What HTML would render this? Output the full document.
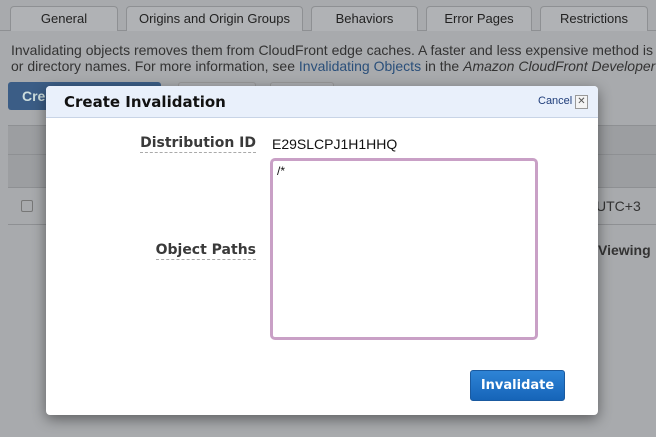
<!DOCTYPE html>
<html><head><style>
body{margin:0;width:656px;height:437px;overflow:hidden;background:#a8aaad;font-family:"Liberation Sans",Arial,sans-serif;position:relative}
.a{position:absolute}
.tab{position:absolute;top:6px;height:24px;border:1px solid #8e9093;border-bottom:none;border-radius:4px 4px 0 0;background:#b0b2b5;font-size:13px;color:#222;text-align:center;line-height:24px}
.lbl{position:absolute;font-weight:bold;font-size:14px;color:#3a3a3a;border-bottom:1px dashed #aaa;line-height:18px;font-family:"DejaVu Sans","Liberation Sans",sans-serif}
</style></head><body>
<div class="a" style="left:0;top:30px;width:656px;height:1px;background:#8e9093"></div>
<div class="tab" style="left:10px;width:106px">General</div>
<div class="tab" style="left:126px;width:175px">Origins and Origin Groups</div>
<div class="tab" style="left:311px;width:105px">Behaviors</div>
<div class="tab" style="left:426px;width:104px">Error Pages</div>
<div class="tab" style="left:540px;width:106px">Restrictions</div>
<div class="a" style="left:11px;top:42px;font-size:14px;color:#333;line-height:16px;white-space:nowrap">Invalidating objects removes them from CloudFront edge caches. A faster and less expensive method is<br>or directory names. For more information, see <span style="color:#2a4f7a">Invalidating Objects</span> in the <i>Amazon CloudFront Developer</i></div>
<div class="a" style="left:8px;top:82px;width:153px;height:28px;background:#3b5d86;border-radius:3px;color:#cdd;font-weight:bold;font-size:14px;line-height:28px;padding-left:14px;box-sizing:border-box">Cre</div>
<div class="a" style="left:178px;top:82px;width:76px;height:28px;border:1px solid #999;border-radius:3px;background:#acaeb1"></div>
<div class="a" style="left:270px;top:82px;width:62px;height:28px;border:1px solid #999;border-radius:3px;background:#acaeb1"></div>
<div class="a" style="left:8px;top:125px;width:648px;height:62px;background:#9c9ea1;border-top:1px solid #8e9093"></div>
<div class="a" style="left:8px;top:154px;width:648px;height:1px;background:#8e9093"></div>
<div class="a" style="left:8px;top:187px;width:648px;height:1px;background:#8e9093"></div>
<div class="a" style="left:8px;top:224px;width:648px;height:1px;background:#8e9093"></div>
<div class="a" style="left:21px;top:200px;width:10px;height:10px;border:1px solid #777;border-radius:2px"></div>
<div class="a" style="left:596px;top:198px;font-size:14px;color:#333">UTC+3</div>
<div class="a" style="left:598px;top:242px;font-size:14px;font-weight:bold;color:#333">Viewing</div>
<div class="a" style="left:46px;top:86px;width:552px;height:329px;background:#fff;border-radius:4px;box-shadow:0 4px 14px rgba(0,0,0,.45);overflow:hidden">
 <div class="a" style="left:0;top:0;width:552px;height:31px;background:#e9f0fb;border-bottom:1px solid #c8d4e6"></div>
 <div class="a" style="left:18px;top:7px;font-weight:bold;font-size:15px;color:#111;font-family:'DejaVu Sans','Liberation Sans',sans-serif">Create Invalidation</div>
 <div class="a" style="left:492px;top:9px;font-size:11px;color:#1f3d7a">Cancel</div>
 <div class="a" style="left:529px;top:9px;width:11px;height:12px;border:1px solid #999;font-size:10px;line-height:12px;text-align:center;color:#555;background:#f4f4f4">✕</div>
 <div class="lbl" style="right:342px;top:48px">Distribution ID</div>
 <div class="a" style="left:226px;top:50px;font-size:14px;color:#111">E29SLCPJ1H1HHQ</div>
 <div class="lbl" style="right:342px;top:155px">Object Paths</div>
 <div class="a" style="left:224px;top:72px;width:262px;height:176px;border:3px solid #c9a0c6;border-radius:5px;box-sizing:content-box"></div>
 <div class="a" style="left:231px;top:78px;font-size:12px;color:#111">/*</div>
 <div class="a" style="left:424px;top:284px;width:93px;height:29px;background:linear-gradient(#2e84d6,#1664b8);border:1px solid #1a5aa0;border-radius:3px;color:#fff;font-weight:bold;font-size:13px;line-height:29px;text-align:center;font-family:'DejaVu Sans','Liberation Sans',sans-serif">Invalidate</div>
</div>
</body></html>
